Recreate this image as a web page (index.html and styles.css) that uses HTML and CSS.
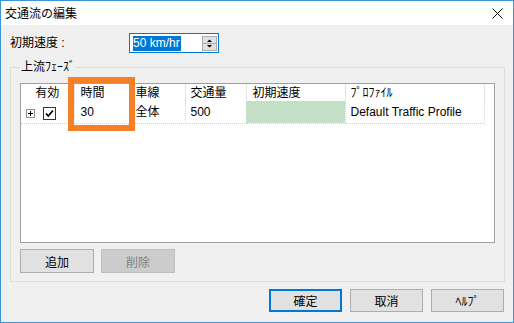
FILE: index.html
```html
<!DOCTYPE html>
<html lang="ja">
<head>
    <meta charset="UTF-8">
    <title>交通流の編集</title>
    <link rel="stylesheet" href="styles.css">
</head>
<body>

<div class="window">
    <div class="titlebar">
        <span class="title">交通流の編集</span>
        <svg class="close" width="11" height="11" viewBox="0 0 11 11">
            <path d="M0.5 0.5 L10.5 10.5 M10.5 0.5 L0.5 10.5" stroke="#000" stroke-width="1" fill="none"/>
        </svg>
    </div>

    <div class="content">
        <div class="speed-row">
            <label>初期速度 :</label>
            <div class="spin-input">
                <span class="sel">50 km/hr</span>
                <span class="spinner">
                    <svg width="13" height="13" viewBox="0 0 13 13">
                        <path d="M4 5 L6.5 2.5 L9 5 Z" fill="#000"/>
                        <line x1="0" y1="6.5" x2="13" y2="6.5" stroke="#adadad"/>
                        <path d="M4 8 L9 8 L6.5 10.5 Z" fill="#000"/>
                    </svg>
                </span>
            </div>
        </div>

        <fieldset class="group">
            <legend>上流ﾌｪｰｽﾞ</legend>
            <div class="listview">
                <table class="grid">
                    <colgroup>
                        <col style="width:53px">
                        <col style="width:56px">
                        <col style="width:55px">
                        <col style="width:61px">
                        <col style="width:99px">
                        <col style="width:139px">
                    </colgroup>
                    <thead>
                        <tr>
                            <th class="c-on">有効</th>
                            <th class="c-time">時間</th>
                            <th>車線</th>
                            <th>交通量</th>
                            <th class="c-speed">初期速度</th>
                            <th>ﾌﾟﾛﾌｧｲﾙ</th>
                        </tr>
                    </thead>
                    <tbody>
                        <tr>
                            <td class="c-on">
                                <svg class="expander" width="9" height="9" viewBox="0 0 9 9">
                                    <rect x="0.5" y="0.5" width="8" height="8" fill="#fff" stroke="#919191"/>
                                    <path d="M2 4.5 H7 M4.5 2 V7" stroke="#000"/>
                                </svg>
                                <svg class="check" width="13" height="13" viewBox="0 0 13 13">
                                    <rect x="0.5" y="0.5" width="12" height="12" fill="#fff" stroke="#333"/>
                                    <path d="M3 6.5 L5.3 9 L10 3.5" stroke="#000" stroke-width="1.8" fill="none"/>
                                </svg>
                            </td>
                            <td class="c-time">30</td>
                            <td>全体</td>
                            <td>500</td>
                            <td class="c-speed green"></td>
                            <td>Default Traffic Profile</td>
                        </tr>
                    </tbody>
                </table>
            </div>
            <div class="group-buttons">
                <button class="btn">追加</button>
                <button class="btn" disabled>削除</button>
            </div>
        </fieldset>

        <div class="dialog-buttons">
            <button class="btn btn-default">確定</button>
            <button class="btn">取消</button>
            <button class="btn">ﾍﾙﾌﾟ</button>
        </div>
    </div>

    <div class="mark"></div>
</div>

</body>
</html>
```

FILE: styles.css
```css
* {
    box-sizing: border-box;
}

html, body {
    margin: 0;
}

body {
    width: 514px;
    height: 323px;
    overflow: hidden;
    font-family: "Liberation Sans", "Noto Sans CJK JP", sans-serif;
    font-size: 12px;
    color: #000;
}

.window {
    position: relative;
    width: 514px;
    height: 323px;
    border: 1px solid #3c96d6;
    background-color: #f0f0f0;
    display: flex;
    flex-direction: column;
}

.titlebar {
    height: 24px;
    background-color: #fff;
    display: flex;
    align-items: center;
    justify-content: space-between;
    padding: 0 10px 0 4px;
}
.title {
    font-family: "Noto Sans CJK JP", sans-serif;
    line-height: 24px;
}
.close {
    display: block;
    margin-top: 1px;
}

.content {
    flex: 1;
    padding: 8px 8px 0 9px;
    display: flex;
    flex-direction: column;
}

/* speed row */
.speed-row {
    display: flex;
    align-items: center;
    height: 20px;
}
.speed-row label {
    width: 119px;
    line-height: 16px;
}
.spin-input {
    width: 90px;
    height: 20px;
    border: 1px solid #0078d7;
    background-color: #fff;
    display: flex;
    align-items: center;
    justify-content: space-between;
    padding: 0 1px 0 3px;
}
.sel {
    background-color: #0078d7;
    color: #fff;
    line-height: 15px;
    padding: 0 1px 0 0;
}
.spinner {
    width: 15px;
    height: 15px;
    border: 1px solid #adadad;
    background-color: #e1e1e1;
}
.spinner svg {
    display: block;
}

/* group */
.group {
    margin: 7px 0 0 0;
    padding: 9px 9px 8px;
    border: 1px solid #dcdcdc;
    min-width: 0;
}
.group legend {
    padding: 0 1px;
    line-height: 14px;
}

.listview {
    height: 160px;
    border: 1px solid #a0a0a0;
    background-color: #fff;
}
.grid {
    table-layout: fixed;
    width: 463px;
    border-collapse: collapse;
    border-spacing: 0;
}
.grid th {
    height: 17px;
    padding: 0 0 0 5px;
    font-weight: normal;
    text-align: left;
    line-height: 16px;
    border-right: 1px solid #e5e5e5;
    white-space: nowrap;
}
.grid td {
    height: 22px;
    padding: 0 0 0 5px;
    line-height: 16px;
    border-right: 1px dotted #d4d4d4;
    border-bottom: 1px dotted #d4d4d4;
    white-space: nowrap;
}
.grid th.c-on {
    text-align: center;
    padding: 0;
}
.grid .c-time,
.grid .c-speed {
    padding-left: 6px;
}
.grid td.c-on {
    padding-top: 2px;
}
.grid .green {
    background-color: #c3dfc5;
}
.expander,
.check {
    vertical-align: middle;
}
.check {
    margin-left: 5px;
}

/* buttons */
.btn {
    font-family: "Noto Sans CJK JP", sans-serif;
    font-size: 12px;
    color: #000;
    background-color: #e1e1e1;
    border: 1px solid #adadad;
    padding: 0;
    margin: 0;
}
.btn:disabled {
    background-color: #cccccc;
    border-color: #bfbfbf;
    color: #838383;
}
.btn-default {
    border: 2px solid #0078d7;
}

.group-buttons {
    display: flex;
    gap: 7px;
    margin-top: 6px;
}
.group-buttons .btn {
    width: 74px;
    height: 24px;
}

.dialog-buttons {
    display: flex;
    justify-content: flex-end;
    gap: 8px;
    margin-top: 7px;
    padding-right: 1px;
}
.dialog-buttons .btn {
    width: 73px;
    height: 23px;
}

/* annotation box over the time column */
.mark {
    position: absolute;
    left: 67px;
    top: 76px;
    width: 67px;
    height: 54px;
    border: 6px solid #f58025;
}
```
